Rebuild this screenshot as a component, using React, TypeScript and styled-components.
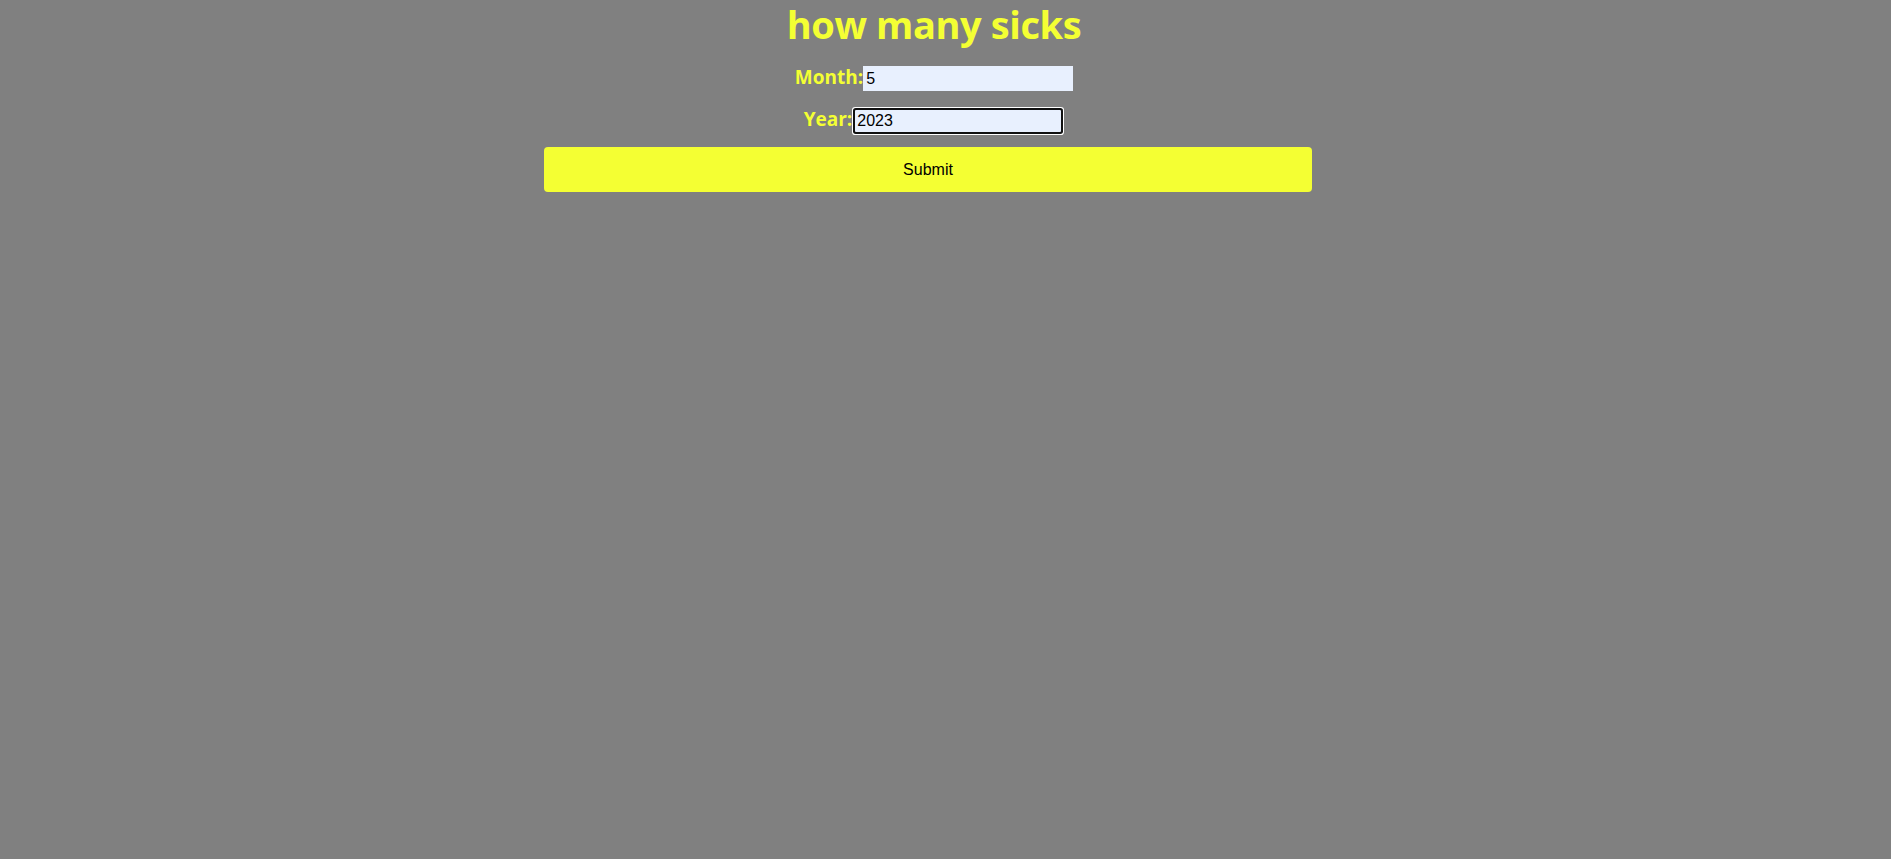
import React from "react";
import styled, { createGlobalStyle } from "styled-components";

const GlobalStyle = createGlobalStyle`
  html, body {
    margin: 0;
    padding: 0;
    background: #808080;
  }
  #root {
    min-height: 100vh;
  }
`;

const YELLOW = "#f4ff33";

const Page = styled.main`
  min-height: 100vh;
  display: flex;
  flex-direction: column;
  align-items: center;
  padding-right: 23px;
  box-sizing: border-box;
  background: #808080;
`;

const Title = styled.h1`
  margin: 0;
  font-family: "Open Sans", "Noto Sans", sans-serif;
  font-weight: 700;
  font-size: 38px;
  letter-spacing: -0.4px;
  line-height: 48px;
  color: ${YELLOW};
`;

const Form = styled.form`
  margin-top: 18px;
  display: flex;
  flex-direction: column;
  align-items: center;
`;

const Row = styled.div<{ $gapTop?: number }>`
  display: flex;
  align-items: baseline;
  margin-top: ${(p) => p.$gapTop ?? 0}px;
`;

const Label = styled.label`
  font-family: "Open Sans", "Noto Sans", sans-serif;
  font-weight: 700;
  font-size: 19px;
  line-height: 20px;
  color: ${YELLOW};
`;

const Input = styled.input<{ $focused?: boolean }>`
  box-sizing: border-box;
  width: ${(p) => (p.$focused ? 206 : 210)}px;
  height: ${(p) => (p.$focused ? 22 : 25)}px;
  margin: ${(p) => (p.$focused ? "0 3px" : "0")};
  padding: 0 ${(p) => (p.$focused ? 2 : 3)}px;
  border: none;
  border-radius: ${(p) => (p.$focused ? "1px" : "0")};
  background: #e8f0fe;
  color: #000;
  font-family: "Liberation Sans", Arial, sans-serif;
  font-size: 16px;
  outline: none;
  box-shadow: ${(p) =>
    p.$focused ? "0 0 0 2px #101010, 0 0 0 3px #ffffff" : "none"};
`;

const SubmitButton = styled.button`
  margin-top: 15px;
  margin-right: 12px;
  width: 768px;
  height: 45px;
  border: none;
  border-radius: 4px;
  background: ${YELLOW};
  color: #000;
  font-family: "Liberation Sans", Arial, sans-serif;
  font-size: 16px;
  cursor: pointer;
`;

export default function App() {
  return (
    <>
      <GlobalStyle />
      <Page>
        <Title>how many sicks</Title>
        <Form onSubmit={(e) => e.preventDefault()}>
          <Row>
            <Label htmlFor="month">Month:</Label>
            <Input id="month" type="text" defaultValue="5" />
          </Row>
          <Row $gapTop={18}>
            <Label htmlFor="year">Year:</Label>
            <Input id="year" type="text" defaultValue="2023" $focused />
          </Row>
          <SubmitButton type="submit">Submit</SubmitButton>
        </Form>
      </Page>
    </>
  );
}
